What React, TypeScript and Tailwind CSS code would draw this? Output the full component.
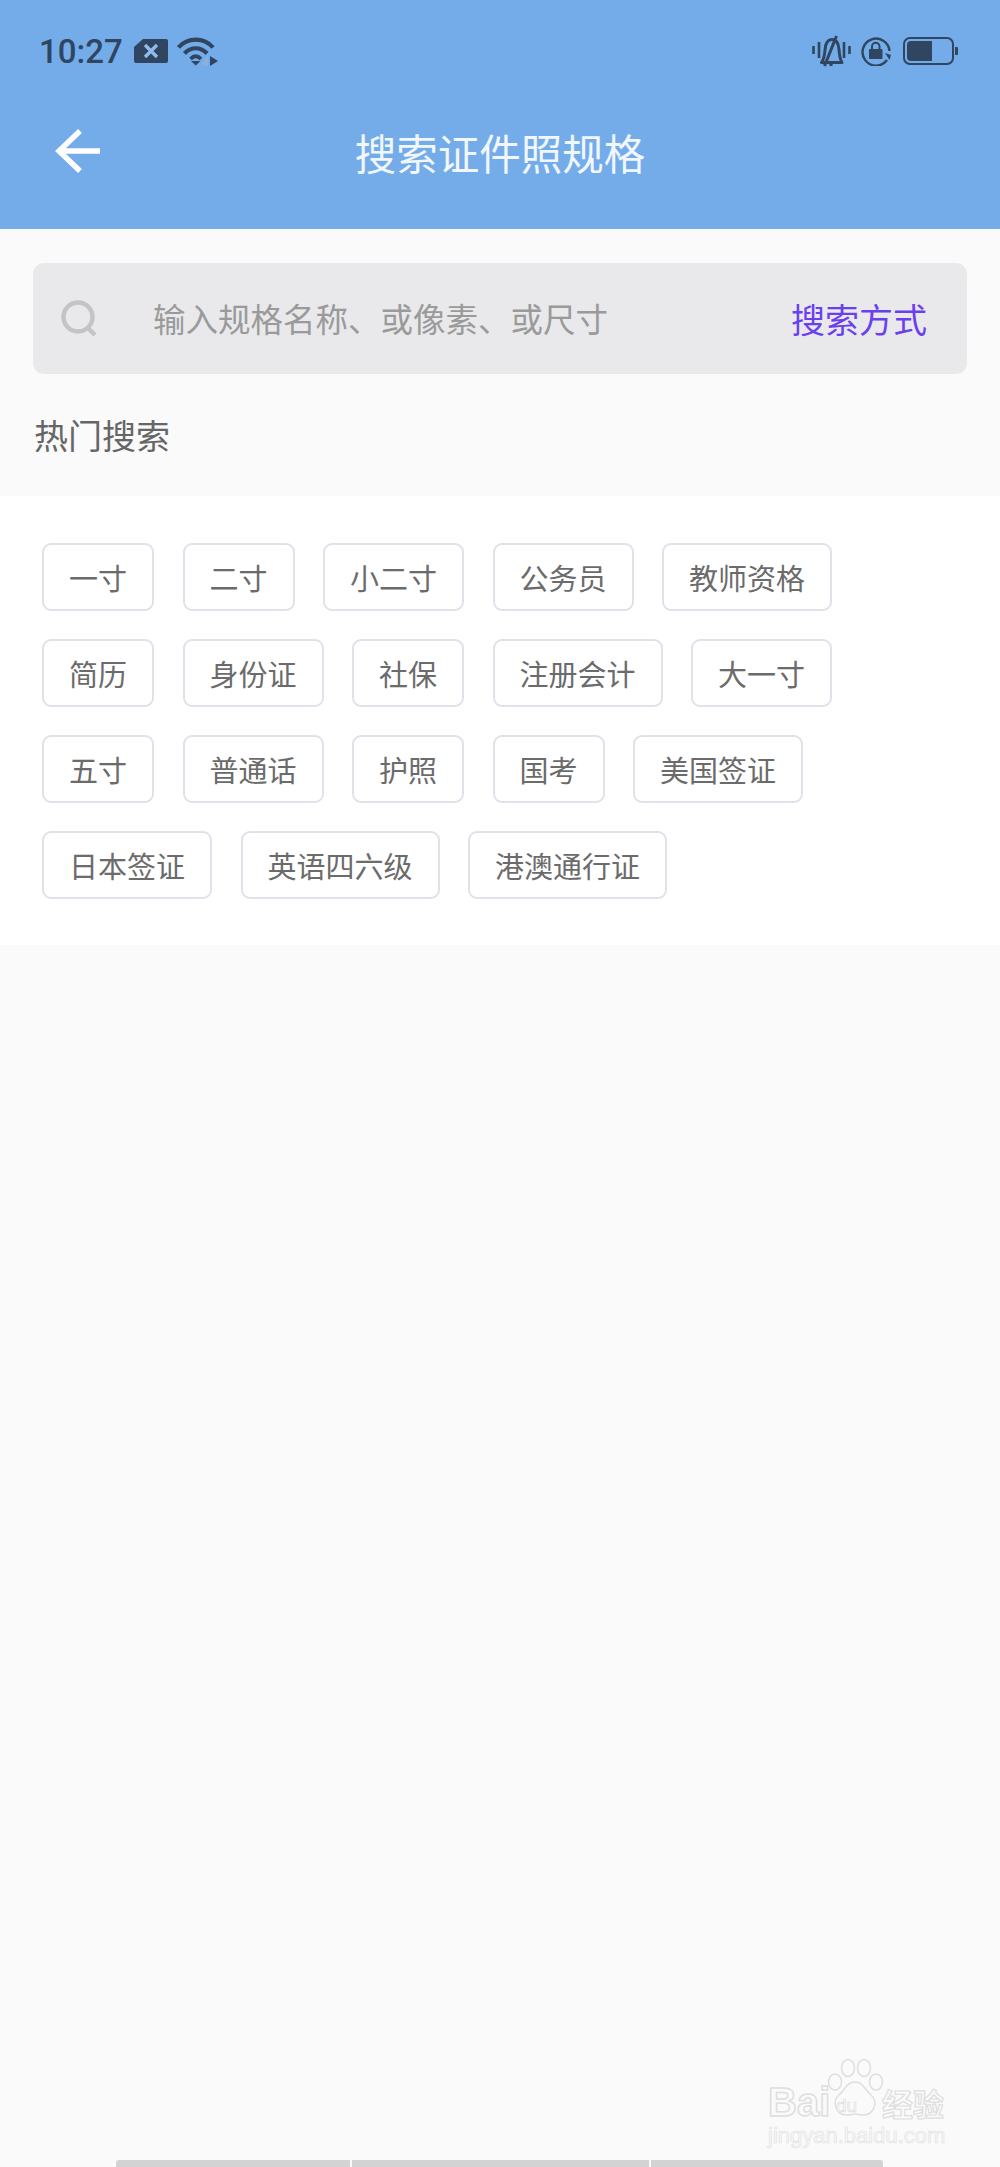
const cjk = "font-['Noto_Sans_CJK_SC','Noto_Sans',sans-serif]";

const rows = [
  ['一寸', '二寸', '小二寸', '公务员', '教师资格'],
  ['简历', '身份证', '社保', '注册会计', '大一寸'],
  ['五寸', '普通话', '护照', '国考', '美国签证'],
  ['日本签证', '英语四六级', '港澳通行证'],
];

function SimIcon() {
  return (
    <svg width="34" height="24" viewBox="0 0 34 24">
      <path d="M9 0H32a2 2 0 0 1 2 2V22a2 2 0 0 1-2 2H2a2 2 0 0 1-2-2V8z" fill="#2f4560" />
      <path d="M11 6l12 12M23 6L11 18" stroke="#8fbcec" strokeWidth="3.400" fill="none" />
    </svg>
  );
}

function WifiIcon() {
  return (
    <svg width="42" height="29" viewBox="0 0 42 29" fill="none">
      <path d="M1.500 10.500C10.500 0 27 0 36 10.500" stroke="#2f4560" strokeWidth="4.200" />
      <path d="M7.500 16.500C14 9.500 23.500 9.500 30 16.500" stroke="#2f4560" strokeWidth="4.200" />
      <path d="M13.500 22C17 18.500 20.500 18.500 24 22" stroke="#2f4560" strokeWidth="3.800" />
      <path d="M14 24h9.500l-4.700 4.500z" fill="#2f4560" />
      <path d="M31 18v10.500h-7z" fill="#8fb0d6" />
      <path d="M33 19l8 5-8 5z" fill="#2f4560" />
    </svg>
  );
}

function BellIcon() {
  return (
    <svg width="39" height="33" viewBox="0 0 39 33" fill="none" stroke="#2f4560">
      <path d="M1.500 11v8M7 7v16M32 7v16M37.500 11v8" strokeWidth="2.600" />
      <path d="M9.500 27.500c2.500-3 3-6 3.500-12.500 .5-7 3-10.500 7-10.500s6.500 3.500 7 10c.5 6.500 1 10 3 13z" strokeWidth="3" strokeLinejoin="round" />
      <path d="M24.500 1L12.500 31" strokeWidth="3" />
      <path d="M19 28v3" strokeWidth="3.200" />
    </svg>
  );
}

function LockRotateIcon() {
  return (
    <svg width="30" height="30" viewBox="0 0 30 30" fill="none">
      <path d="M26 24A13.500 13.500 0 1 1 28.500 15" stroke="#2f4560" strokeWidth="2.400" />
      <path d="M24 17l6 2-1.500 5z" fill="#2f4560" />
      <rect x="8" y="13" width="13.500" height="10" rx="1" fill="#2f4560" />
      <path d="M11 13v-2.500a3.700 3.700 0 0 1 7.500 0V13" stroke="#2f4560" strokeWidth="2" />
    </svg>
  );
}

function BatteryIcon() {
  return (
    <div className="flex items-center">
      <div className="w-[51px] h-[28px] rounded-[7px] border-[2px] border-[#2f4560] p-[2px] flex">
        <div className="w-[25px] h-full bg-[#2f4560] rounded-l-[4px]" />
      </div>
      <div className="w-[3px] h-[8px] ml-[1px] bg-[#2f4560] rounded-r-[1px]" />
    </div>
  );
}

export default function App() {
  return (
    <div className={`relative w-[1000px] h-[2167px] overflow-hidden bg-[#fafafa] ${cjk}`}>
      {/* header */}
      <div className="h-[229px] bg-[#73ace8]">
        <div className="h-[102px] flex items-center justify-between pl-[39px] pr-[42px]">
          <div className="flex items-center">
            <span className="font-['Roboto',sans-serif] font-medium text-[33px] leading-none text-[#2f4560]">10:27</span>
            <div className="ml-[11px]"><SimIcon /></div>
            <div className="ml-[9px]"><WifiIcon /></div>
          </div>
          <div className="flex items-center gap-[10px]">
            <BellIcon />
            <LockRotateIcon />
            <div className="ml-[2px]"><BatteryIcon /></div>
          </div>
        </div>
        <div className="relative h-[102px] flex items-center justify-center">
          <svg className="absolute left-[54px] top-[26px]" width="48" height="46" viewBox="0 0 48 46" fill="none" stroke="white" strokeWidth="5.500">
            <path d="M26 3L5 23l21 20" />
            <path d="M5 23H46" />
          </svg>
          <span className="text-[41.500px] leading-none text-white/90">搜索证件照规格</span>
        </div>
      </div>

      {/* search */}
      <div className="px-[33px] pt-[34px]">
        <div className="h-[111px] rounded-[11px] bg-[#e9e9eb] flex items-center pl-[28px] pr-[40px]">
          <svg width="37" height="37" viewBox="0 0 37 37" fill="none" stroke="#c4c4c4" strokeWidth="4.500">
            <circle cx="17" cy="17" r="14.500" />
            <path d="M27 28l7 7" />
          </svg>
          <span className="ml-[55px] text-[32.500px] leading-none text-[#9a9a9a]">输入规格名称、或像素、或尺寸</span>
          <span className="ml-auto text-[34px] leading-none text-[#6a3ff0]">搜索方式</span>
        </div>
      </div>
      <div className="h-[122px] pl-[34px] flex items-center">
        <span className="text-[34px] leading-none text-[#666666]">热门搜索</span>
      </div>

      {/* hot tags */}
      <div className="bg-white pt-[47px] pb-[46px] px-[42px] flex flex-col gap-[28px]">
        {rows.map((row, i) => (
          <div key={i} className="flex gap-[28.500px]">
            {row.map(t => (
              <div key={t} className="h-[68px] px-[25px] rounded-[9px] border-[2px] border-[#dfe2e8] flex items-center text-[29px] leading-none text-[#6b6b6b]">
                {t}
              </div>
            ))}
          </div>
        ))}
      </div>

      {/* baidu watermark */}
      <div className="absolute left-[768px] top-[2058px] w-[180px] h-[90px] text-[#fafafa]">
        <span className="absolute left-0 top-[24px] font-['Liberation_Sans',sans-serif] font-bold text-[40px] leading-none [-webkit-text-stroke:1.5px_#dedede]">Bai</span>
        <svg className="absolute left-[58px] top-0" width="58" height="60" viewBox="0 0 58 60" fill="#fafafa" stroke="#dedede" strokeWidth="1.500">
          <ellipse cx="9" cy="24" rx="6.500" ry="8" />
          <ellipse cx="22" cy="10" rx="6.500" ry="8.500" />
          <ellipse cx="38" cy="10" rx="6.500" ry="8.500" />
          <ellipse cx="50" cy="24" rx="6.500" ry="8" />
          <path d="M29 24c8 0 10 8 16 13 7 6 4 20-8 20-4 0-5-1-8-1s-4 1-8 1C9 57 6 43 13 37c6-5 8-13 16-13z" />
        </svg>
        <span className="absolute left-[68px] top-[38px] font-['Liberation_Sans',sans-serif] text-[19px] leading-none [-webkit-text-stroke:0.7px_#dedede]">du</span>
        <span className="absolute left-[114px] top-[29px] text-[31px] leading-none font-bold [-webkit-text-stroke:1.2px_#dedede]">经验</span>
        <span className="absolute left-0 top-[67px] font-['Liberation_Sans',sans-serif] text-[22px] leading-none whitespace-nowrap [-webkit-text-stroke:0.7px_#e2e2e2]">jingyan.baidu.com</span>
      </div>

      {/* bottom nav strip */}
      <div className="absolute bottom-0 left-[116px] flex">
        <div className="w-[234px] h-[7px] bg-[#d3d3d3] rounded-tl-[3px]" />
        <div className="w-[297px] h-[7px] ml-[2px] bg-[#d3d3d3]" />
        <div className="w-[232px] h-[7px] ml-[2px] bg-[#d3d3d3] rounded-tr-[3px]" />
      </div>
    </div>
  );
}
